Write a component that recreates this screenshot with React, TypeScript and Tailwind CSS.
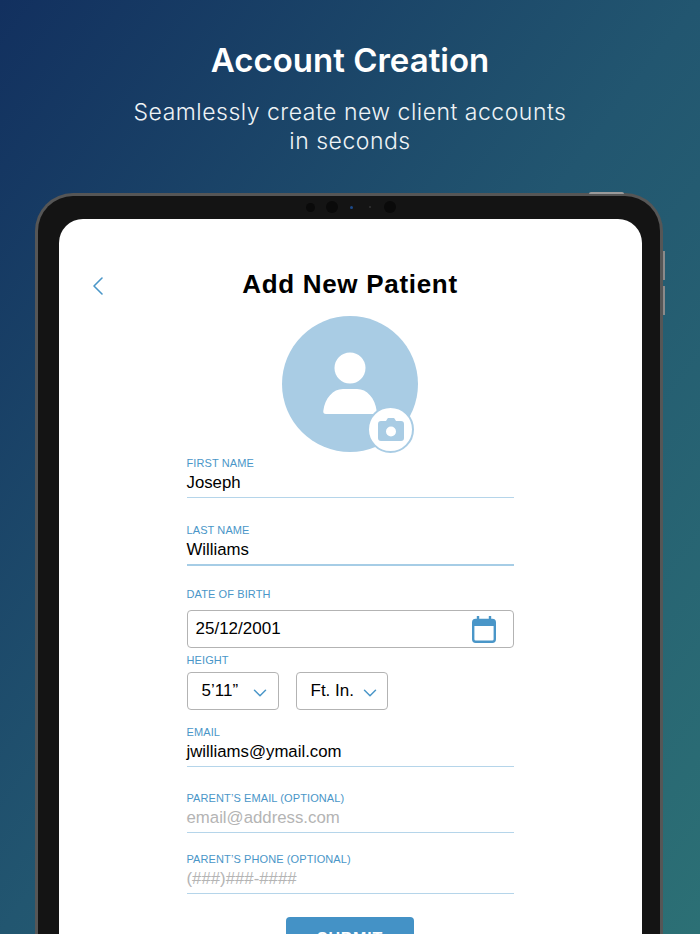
import React from 'react';
import { ChevronLeft, ChevronDown } from 'lucide-react';

const sans = 'font-["Liberation_Sans",Arial,sans-serif]';
const labelClass = 'text-[11px] leading-[13px] tracking-[0.1px] text-[#4a96c8]';

const UnderlineField = ({ label, value, placeholder }: { label: string; value: string; placeholder?: boolean }) => (
  <div className="pb-[4px]">
    <div className={labelClass}>{label}</div>
    <div className={`mt-[3px] text-[16.8px] leading-[20px] ${placeholder ? 'text-[#b4b4b4]' : 'text-black'}`}>{value}</div>
  </div>
);

const SelectBox = ({ value, padding, gap }: { value: string; padding: string; gap: string }) => (
  <div className={`flex h-[38px] w-[92px] items-center rounded-[4px] border border-[#b3b3b3] text-[17px] text-black ${padding} ${gap}`}>
    <span>{value}</span>
    <ChevronDown size={22} strokeWidth={1.6} className="mt-[3px] text-[#4a96c8]" />
  </div>
);

export default function App() {
  return (
    <div className={`h-[934px] w-[700px] overflow-hidden bg-[linear-gradient(to_bottom_right,#12305f_0%,#225670_50%,#2c7075_100%)] ${sans}`}>
      <header className='pt-[41px] text-center font-["Inter",sans-serif] text-white'>
        <h1 className="text-[33px] font-semibold leading-[38px]">Account Creation</h1>
        <p className="mt-[19px] text-[23px] font-light leading-[29px] tracking-[0.5px] text-[#eef3f6]">
          Seamlessly create new client accounts
          <br />
          in seconds
        </p>
      </header>

      {/* tablet frame */}
      <div className="relative ml-[35px] mt-[37px] h-[800px] w-[628px] rounded-t-[38px] border-[3px] border-b-0 border-[#565656] bg-[#141414] pl-[21px] pr-[18px] pt-[23px]">
        <div className="absolute -top-[4px] right-[36px] h-[2px] w-[35px] rounded-t-sm bg-[#9a9a9a]" />
        <div className="absolute -right-[5px] top-[55px] h-[29px] w-[2px] bg-[#8a8a8a]" />
        <div className="absolute -right-[5px] top-[90px] h-[29px] w-[2px] bg-[#8a8a8a]" />
        <div className="absolute left-[268px] top-[5px] flex items-center">
          <span className="h-[9px] w-[9px] rounded-full bg-[#0a0a0a]" />
          <span className="ml-[11px] h-[12px] w-[12px] rounded-full bg-[#0a0a0a]" />
          <span className="ml-[12px] h-[3px] w-[3px] rounded-full bg-[#1c4a8a]" />
          <span className="ml-[16px] h-[2px] w-[2px] rounded-full bg-[#333]" />
          <span className="ml-[13px] h-[12px] w-[12px] rounded-full bg-[#0a0a0a]" />
        </div>

        <div className="relative h-[800px] rounded-t-[24px] bg-white pr-[1px] pt-[49px]">
          <ChevronLeft size={32} strokeWidth={1.2} className="absolute left-[23px] top-[51px] text-[#4a96c8]" />
          <h2 className="text-center text-[26px] font-bold leading-[32px] tracking-[0.7px] text-black">Add New Patient</h2>

          <div className="relative mx-auto mt-[16px] flex h-[136px] w-[136px] items-center justify-center rounded-full bg-[#a9cce4]">
            <svg width="54" height="64" viewBox="0 0 54 64" fill="#fff">
              <circle cx="27" cy="16" r="15.5" />
              <path d="M3 62c-2 0-3-1-2.700-3C2 46 10 37 20 37h14c10 0 18 9 19.700 22 .3 2-.7 3-2.700 3z" />
            </svg>
            <div className="absolute left-[85px] top-[90px] flex h-[47px] w-[47px] items-center justify-center rounded-full border-2 border-[#a9cce4] bg-white">
              <svg width="26" height="23" viewBox="0 0 26 23" fill="#a9cce4">
                <path fillRule="evenodd" d="M3 3h5l1.500-2.500a1 1 0 0 1 .8-.5h5.400a1 1 0 0 1 .8.500L18 3h5a3 3 0 0 1 3 3v14a3 3 0 0 1-3 3H3a3 3 0 0 1-3-3V6a3 3 0 0 1 3-3zm10 5.500a5 5 0 1 0 0 10 5 5 0 0 0 0-10z" />
              </svg>
            </div>
          </div>

          <form className="mx-auto mt-[5px] w-[327px]">
            <div className="border-b border-[#b5d5ea]">
              <UnderlineField label="FIRST NAME" value="Joseph" />
            </div>
            <div className="mt-[26px] border-b-2 border-[#a6cde6]">
              <UnderlineField label="LAST NAME" value="Williams" />
            </div>

            <div className={`mt-[22px] ${labelClass}`}>DATE OF BIRTH</div>
            <div className="mt-[9px] flex h-[38px] items-center justify-between rounded-[4px] border border-[#b3b3b3] pl-[8px] pr-[17px] text-[17px] text-black">
              <span>25/12/2001</span>
              <svg width="24" height="27" viewBox="0 0 24 27" fill="none">
                <rect x="1.200" y="4" width="21.600" height="21.800" rx="2.500" stroke="#4a96c8" strokeWidth="2.400" />
                <path d="M1 5.500A2.500 2.500 0 0 1 3.500 3h17A2.500 2.500 0 0 1 23 5.500V10H1z" fill="#4a96c8" />
                <path d="M6 .500v4M18 .500v4" stroke="#4a96c8" strokeWidth="2.400" strokeLinecap="round" />
              </svg>
            </div>

            <div className={`mt-[6px] ${labelClass}`}>HEIGHT</div>
            <div className="mt-[5px] flex gap-[17px]">
              <SelectBox value="5’11”" padding="pl-[14px]" gap="gap-[11px]" />
              <SelectBox value="Ft. In." padding="pl-[14px]" gap="gap-[5px]" />
            </div>

            <div className="mt-[16px] border-b border-[#b5d5ea]">
              <UnderlineField label="EMAIL" value="jwilliams@ymail.com" />
            </div>
            <div className="mt-[25px] border-b border-[#b5d5ea]">
              <UnderlineField label="PARENT’S EMAIL (OPTIONAL)" value="email@address.com" placeholder />
            </div>
            <div className="mt-[20px] border-b border-[#b5d5ea]">
              <UnderlineField label="PARENT’S PHONE (OPTIONAL)" value="(###)###-####" placeholder />
            </div>

            <button type="button" className="mx-auto mt-[23px] block h-[44px] w-[128px] rounded-[4px] bg-[#4492c6] text-[16px] font-bold tracking-[0.8px] text-white">
              SUBMIT
            </button>
          </form>
        </div>
      </div>
    </div>
  );
}
